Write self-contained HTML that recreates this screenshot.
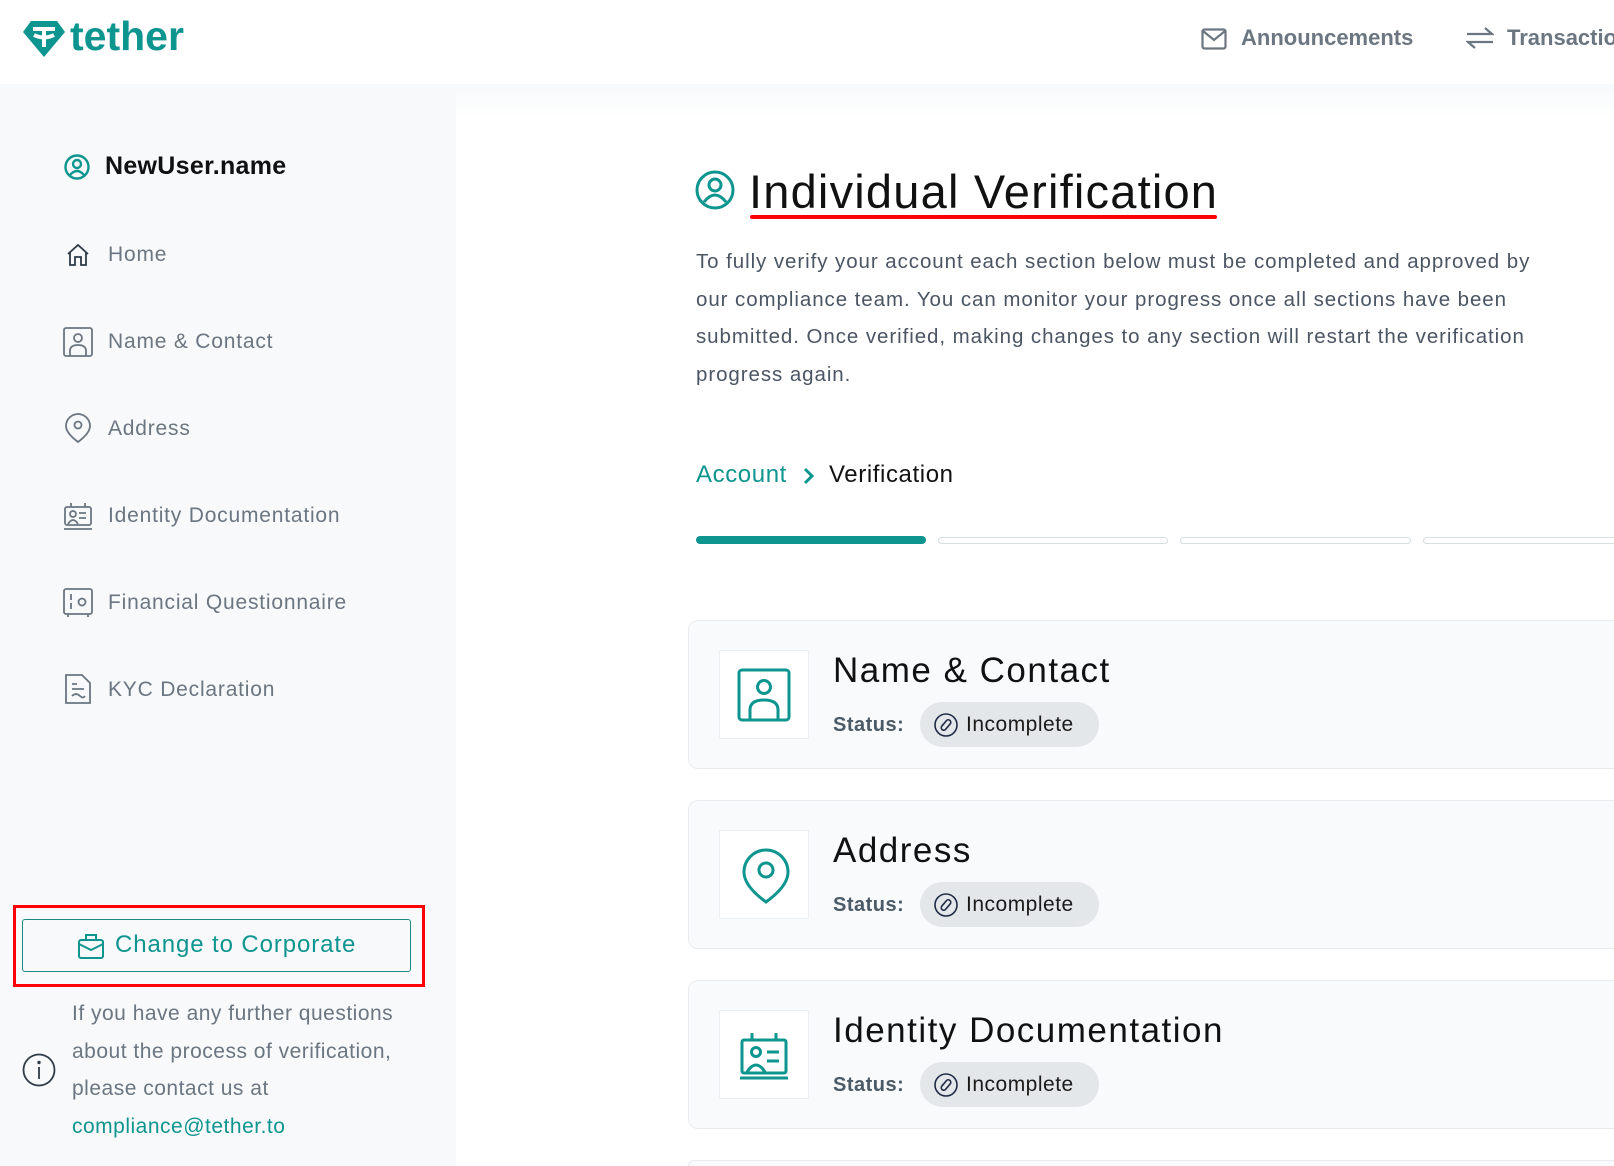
<!DOCTYPE html>
<html><head><meta charset="utf-8"><style>
*{margin:0;padding:0;box-sizing:border-box}
html,body{width:1614px;height:1166px;overflow:hidden}
body{background:#fff;font-family:"Liberation Sans",Arial,sans-serif;position:relative}
.a{position:absolute}
.hdr{left:0;top:0;width:1614px;height:84px;background:#fff}
.side{left:0;top:84px;width:456px;height:1082px;background:#f8f9fb}
.band{left:456px;top:84px;width:1158px;height:34px;background:linear-gradient(#f8f9fb,#fff)}
.nav{left:108px;font-size:21px;color:#6b7681;line-height:24px;letter-spacing:0.8px}
.p{left:696px;width:855px;font-size:20.5px;color:#4b5563;line-height:37.5px;letter-spacing:0.93px}
.card{left:688px;width:940px;height:149px;background:#f9fafc;border:1px solid #e9ecef;border-radius:10px}
.ib{left:30px;top:29px;width:90px;height:89px;background:#fff;border:1px solid #edf0f2}
.ct{left:144px;top:30px;font-size:35px;color:#111;white-space:nowrap;letter-spacing:1.5px}
.st{left:144px;top:93px;font-size:20px;font-weight:bold;color:#4a5a66;letter-spacing:0.5px}
.pill{left:231px;top:81px;width:179px;height:45px;background:#e4e7ea;border-radius:23px}
.pill span{position:absolute;left:46px;top:11px;font-size:21px;color:#1a1a1a;letter-spacing:0.5px}
.pill svg{position:absolute;left:14px;top:11px}
</style></head><body>
<div class="a hdr"></div>
<svg class="a" style="left:22px;top:20px" width="44" height="38" viewBox="0 0 44 38"><path d="M9 1H35L43 12L22 37L1 12Z" fill="#0e958f"/><path d="M11 9H33M22 9V27M12 15Q22 20 32 15" stroke="#fff" stroke-width="4" fill="none"/></svg>
<div class="a" style="left:70px;top:13px;font-size:41px;font-weight:bold;color:#0e958f;letter-spacing:0px">tether</div>
<svg class="a" style="left:1201px;top:28px" width="26" height="22" viewBox="0 0 26 22"><rect x="1.5" y="1.5" width="23" height="19" rx="2" fill="none" stroke="#6b7681" stroke-width="2.2"/><path d="M2 3L13 12L24 3" fill="none" stroke="#6b7681" stroke-width="2.2"/></svg>
<div class="a" style="left:1241px;top:25px;font-size:22px;font-weight:bold;color:#6b7681">Announcements</div>
<svg class="a" style="left:1466px;top:26px" width="28" height="24" viewBox="0 0 28 24"><path d="M1 8H26L19 2M27 16H2L9 22" fill="none" stroke="#6b7681" stroke-width="2.2"/></svg>
<div class="a" style="left:1507px;top:25px;font-size:22px;font-weight:bold;color:#6b7681;white-space:nowrap">Transactions</div>

<div class="a side"></div>
<div class="a band"></div>
<svg class="a" style="left:64px;top:154px" width="26" height="26" viewBox="0 0 26 26" fill="none" stroke="#0e958f" stroke-width="2.4"><circle cx="13" cy="13" r="11.5"/><circle cx="13" cy="10" r="4"/><path d="M6 21Q13 13 20 21"/></svg>
<div class="a" style="left:105px;top:152px;font-size:25px;font-weight:bold;color:#111;letter-spacing:0.3px">NewUser.name</div>

<svg class="a" style="left:66px;top:243px" width="24" height="24" viewBox="0 0 24 24" fill="none" stroke="#2f3b46" stroke-width="1.8"><path d="M2 11L12 2L22 11M4 9V22H9V14H15V22H20V9"/></svg>
<div class="a nav" style="top:243px">Home</div>
<svg class="a" style="left:63px;top:327px" width="30" height="30" viewBox="0 0 30 30" fill="none" stroke="#6b7681" stroke-width="1.8"><rect x="1" y="1" width="28" height="28" rx="2"/><circle cx="15" cy="11" r="4"/><path d="M7 29V24Q7 18 15 18Q23 18 23 24V29"/></svg>
<div class="a nav" style="top:330px">Name &amp; Contact</div>
<svg class="a" style="left:65px;top:413px" width="26" height="30" viewBox="0 0 26 30" fill="none" stroke="#6b7681" stroke-width="1.8"><path d="M13 29Q1 20 1 13A12 12 0 0 1 25 13Q25 20 13 29Z"/><circle cx="13" cy="12" r="3.5"/></svg>
<div class="a nav" style="top:417px">Address</div>
<svg class="a" style="left:63px;top:502px" width="30" height="28" viewBox="0 0 30 28" fill="none" stroke="#6b7681" stroke-width="1.8"><rect x="2" y="5" width="26" height="18" rx="2"/><path d="M8 1V5M22 1V5M1 27H29M16 11H23M16 16H23"/><circle cx="10" cy="12" r="3"/><path d="M5 22Q10 14 15 22"/></svg>
<div class="a nav" style="top:504px">Identity Documentation</div>
<svg class="a" style="left:63px;top:588px" width="30" height="30" viewBox="0 0 30 30" fill="none" stroke="#6b7681" stroke-width="1.8"><rect x="1" y="1" width="28" height="25" rx="2"/><path d="M8 6V12M8 15V21M5 26V29M25 26V29"/><circle cx="19" cy="14" r="3.5"/></svg>
<div class="a nav" style="top:591px">Financial Questionnaire</div>
<svg class="a" style="left:65px;top:674px" width="26" height="30" viewBox="0 0 26 30" fill="none" stroke="#6b7681" stroke-width="1.8"><path d="M1 1H17L25 9V29H1Z"/><path d="M7 10H12M7 15H19M7 22Q11 18 15 22Q18 25 20 22"/></svg>
<div class="a nav" style="top:678px">KYC Declaration</div>

<div class="a" style="left:13px;top:905px;width:412px;height:82px;border:3px solid #f00"></div>
<div class="a" style="left:22px;top:919px;width:389px;height:53px;border:1.5px solid #1b8a85;border-radius:3px"></div>
<svg class="a" style="left:78px;top:933px" width="26" height="26" viewBox="0 0 26 26" fill="none" stroke="#0e958f" stroke-width="2"><rect x="1" y="7" width="24" height="18" rx="2"/><path d="M8 7V2H18V7M1 11L13 17L25 11"/></svg>
<div class="a" style="left:115px;top:931px;font-size:24px;color:#0e958f;letter-spacing:0.9px">Change to Corporate</div>
<svg class="a" style="left:22px;top:1053px" width="34" height="34" viewBox="0 0 34 34" fill="none" stroke="#2f3b46" stroke-width="1.8"><circle cx="17" cy="17" r="15.5"/><path d="M17 14V26"/><circle cx="17" cy="9.5" r="0.8" fill="#2f3b46"/></svg>
<div class="a" style="left:72px;top:995px;font-size:21px;line-height:37.5px;color:#6b7681;width:340px;letter-spacing:0.5px">If you have any further questions about the process of verification, please contact us at<br><span style="color:#0e958f">compliance@tether.to</span></div>

<svg class="a" style="left:695px;top:170px" width="40" height="40" viewBox="0 0 40 40" fill="none" stroke="#0e958f" stroke-width="3"><circle cx="20" cy="20" r="18"/><circle cx="20" cy="15" r="6"/><path d="M9 32Q20 18 31 32"/></svg>
<div class="a" style="left:749px;top:164px;font-size:47px;color:#111;letter-spacing:1.2px">Individual Verification</div>
<div class="a" style="left:750px;top:215px;width:467px;height:4px;background:#f00;border-radius:2px"></div>
<div class="a p" style="top:243px">To fully verify your account each section below must be completed and approved by our compliance team. You can monitor your progress once all sections have been submitted. Once verified, making changes to any section will restart the verification progress again.</div>
<div class="a" style="left:696px;top:461px;font-size:24px;color:#0e958f;letter-spacing:0.6px">Account</div>
<svg class="a" style="left:803px;top:467px" width="12" height="18" viewBox="0 0 12 18"><path d="M2 2L9 9L2 16" fill="none" stroke="#0e958f" stroke-width="3"/></svg>
<div class="a" style="left:829px;top:461px;font-size:24px;color:#111;letter-spacing:0.6px">Verification</div>
<div class="a" style="left:696px;top:536px;width:230px;height:8px;background:#0e958f;border-radius:4px"></div>
<div class="a" style="left:938px;top:537px;width:230px;height:7px;border:1.5px solid #d4dfe0;border-radius:4px"></div>
<div class="a" style="left:1180px;top:537px;width:231px;height:7px;border:1.5px solid #d4dfe0;border-radius:4px"></div>
<div class="a" style="left:1423px;top:537px;width:230px;height:7px;border:1.5px solid #d4dfe0;border-radius:4px"></div>

<div class="a card" style="top:620px">
<div class="a ib"><svg class="a" style="left:17px;top:17px" width="54" height="54" viewBox="0 0 54 54" fill="none" stroke="#0e958f" stroke-width="3"><rect x="2" y="2" width="50" height="50" rx="3"/><circle cx="27" cy="19" r="6.5"/><path d="M13 52V42Q13 32 27 32Q41 32 41 42V52"/></svg></div>
<div class="a ct">Name &amp; Contact</div><div class="a st">Status:</div>
<div class="a pill"><svg width="24" height="24" viewBox="0 0 24 24" fill="none" stroke="#1f2a44" stroke-width="1.6"><circle cx="12" cy="12" r="11"/><rect x="9.5" y="6" width="5" height="12" rx="2.5" transform="rotate(40 12 12)"/></svg><span>Incomplete</span></div>
</div>
<div class="a card" style="top:800px">
<div class="a ib"><svg class="a" style="left:22px;top:17px" width="48" height="56" viewBox="0 0 48 56" fill="none" stroke="#0e958f" stroke-width="3"><path d="M24 54Q2 38 2 24A22 22 0 0 1 46 24Q46 38 24 54Z"/><circle cx="24" cy="22" r="7"/></svg></div>
<div class="a ct">Address</div><div class="a st">Status:</div>
<div class="a pill"><svg width="24" height="24" viewBox="0 0 24 24" fill="none" stroke="#1f2a44" stroke-width="1.6"><circle cx="12" cy="12" r="11"/><rect x="9.5" y="6" width="5" height="12" rx="2.5" transform="rotate(40 12 12)"/></svg><span>Incomplete</span></div>
</div>
<div class="a card" style="top:980px">
<div class="a ib"><svg class="a" style="left:19px;top:21px" width="52" height="48" viewBox="0 0 52 48" fill="none" stroke="#0e958f" stroke-width="3"><rect x="3" y="8" width="44" height="33" rx="2"/><path d="M13 1V8M37 1V8M1 46H49M28 20H40M28 29H40"/><circle cx="17" cy="20" r="4.5"/><path d="M8 40Q17 26 26 40"/></svg></div>
<div class="a ct">Identity Documentation</div><div class="a st">Status:</div>
<div class="a pill"><svg width="24" height="24" viewBox="0 0 24 24" fill="none" stroke="#1f2a44" stroke-width="1.6"><circle cx="12" cy="12" r="11"/><rect x="9.5" y="6" width="5" height="12" rx="2.5" transform="rotate(40 12 12)"/></svg><span>Incomplete</span></div>
</div>
<div class="a card" style="top:1160px;height:6px;border-bottom:none;border-radius:10px 10px 0 0"></div>
</body></html>
